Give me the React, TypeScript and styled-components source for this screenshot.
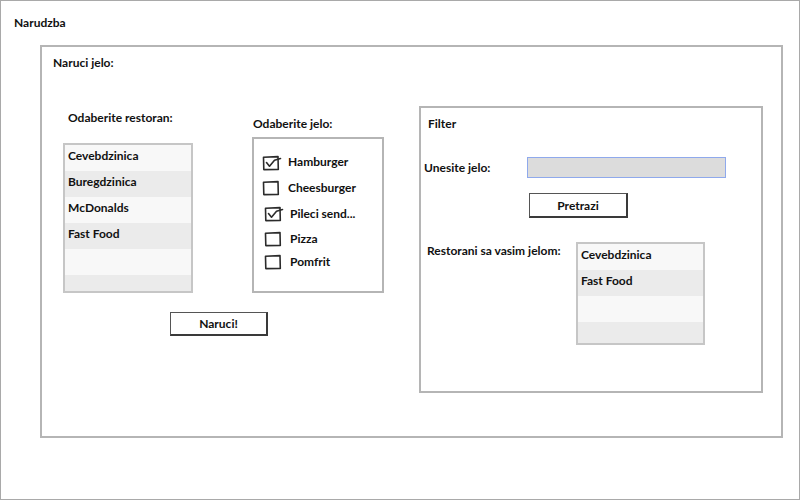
import React from "react";
import styled, { createGlobalStyle } from "styled-components";

const Global = createGlobalStyle`
  html, body { margin: 0; padding: 0; background: #fff; }
  body { font-family: Lato, "Open Sans", "Liberation Sans", sans-serif; color: #111; }
  * { box-sizing: border-box; }
`;

const Window = styled.div`
  width: 800px;
  height: 500px;
  border: 1px solid #a9a9a9;
  display: flex;
  flex-direction: column;
  background: #fff;
`;

const Text = styled.div<{ $ml?: number; $mt?: number; $w?: number }>`
  font-size: 12px;
  font-weight: 700;
  line-height: 16px;
  white-space: nowrap;
  margin-left: ${(p) => p.$ml ?? 0}px;
  margin-top: ${(p) => p.$mt ?? 0}px;
  ${(p) => (p.$w ? `width: ${p.$w}px; flex: none;` : "")}
`;

const Title = styled(Text)`
  margin: 14px 0 0 13px;
`;

const Panel = styled.div`
  margin: 14px 0 0 39px;
  width: 743px;
  height: 393px;
  border: 2px solid #b5b5b5;
  padding-top: 8px;
  display: flex;
  flex-direction: column;
`;

const Body = styled.div`
  display: flex;
  align-items: flex-start;
  margin: 35px 0 0 21px;
`;

const OrderArea = styled.div`
  display: flex;
  flex-direction: column;
`;

const Groups = styled.div`
  display: flex;
  align-items: flex-start;
  gap: 59px;
`;

const Group = styled.div<{ $mt: number; $gap: number }>`
  display: flex;
  flex-direction: column;
  margin-top: ${(p) => p.$mt}px;
  gap: ${(p) => p.$gap}px;
`;

const List = styled.div<{ $w: number; $h: number }>`
  width: ${(p) => p.$w}px;
  height: ${(p) => p.$h}px;
  border: 2px solid #c6c6c6;
  overflow: hidden;
  display: flex;
  flex-direction: column;
  flex: none;
`;

const ListRow = styled.div<{ $alt: boolean }>`
  height: 26px;
  flex: none;
  background: ${(p) => (p.$alt ? "#ebebeb" : "#f8f8f8")};
  font-size: 12px;
  font-weight: 700;
  line-height: 21px;
  padding-left: 3px;
  white-space: nowrap;
`;

const CheckPanel = styled.div`
  width: 132px;
  height: 156px;
  border: 2px solid #b5b5b5;
  padding: 10px 0 0 7px;
  display: flex;
  flex-direction: column;
`;

const CheckRow = styled.div<{ $h: number; $ml: number }>`
  height: ${(p) => p.$h}px;
  display: flex;
  align-items: center;
  gap: 6px;
  margin-left: ${(p) => p.$ml}px;
  font-size: 12px;
  font-weight: 700;
  white-space: nowrap;
`;

const Button = styled.div<{ $w: number; $h: number; $ml: number; $mt: number }>`
  width: ${(p) => p.$w}px;
  height: ${(p) => p.$h}px;
  margin-left: ${(p) => p.$ml}px;
  margin-top: ${(p) => p.$mt}px;
  border: 1px solid #555;
  border-right: 2px solid #3a3a3a;
  border-bottom: 2px solid #3a3a3a;
  background: #fff;
  display: flex;
  align-items: center;
  justify-content: center;
  font-size: 12px;
  font-weight: 700;
  flex: none;
`;

const FilterPanel = styled.div`
  margin-left: 35px;
  width: 344px;
  height: 287px;
  border: 2px solid #b5b5b5;
  padding: 8px 0 0 0;
  display: flex;
  flex-direction: column;
`;

const FieldRow = styled.div<{ $mt: number; $align: string }>`
  display: flex;
  align-items: ${(p) => p.$align};
  margin-top: ${(p) => p.$mt}px;
`;

const Input = styled.div`
  width: 199px;
  height: 21px;
  background: #dcdcdc;
  border: 1px solid #8fa9ec;
`;

const CheckBox: React.FC<{ checked: boolean }> = ({ checked }) => (
  <svg width="20" height="18" viewBox="0 0 20 18" style={{ flex: "none" }}>
    <path
      d="M1.5 4.2 L16 3.6 L16.3 16.4 L1.8 16.6 Z"
      fill="none"
      stroke="#2b2b2b"
      strokeWidth="1.6"
      strokeLinejoin="round"
    />
    {checked && (
      <path
        d="M4.5 9.5 L7.5 13.2 L12.5 7.2 L18.5 5.5"
        fill="none"
        stroke="#2b2b2b"
        strokeWidth="1.6"
        strokeLinecap="round"
        strokeLinejoin="round"
      />
    )}
  </svg>
);

const restaurants = ["Cevebdzinica", "Buregdzinica", "McDonalds", "Fast Food", "", ""];
const dishes = [
  { name: "Hamburger", checked: true, h: 25, ml: 1 },
  { name: "Cheesburger", checked: false, h: 26, ml: 1 },
  { name: "Pileci send...", checked: true, h: 26, ml: 3 },
  { name: "Pizza", checked: false, h: 24, ml: 3 },
  { name: "Pomfrit", checked: false, h: 22, ml: 3 },
];
const found = ["Cevebdzinica", "Fast Food", "", ""];

export default function App() {
  return (
    <>
      <Global />
      <Window>
        <Title>Narudzba</Title>
        <Panel>
          <Text $ml={11}>Naruci jelo:</Text>
          <Body>
            <OrderArea>
              <Groups>
                <Group $mt={4} $gap={17}>
                  <Text $ml={5}>Odaberite restoran:</Text>
                  <List $w={130} $h={150}>
                    {restaurants.map((r, i) => (
                      <ListRow key={i} $alt={i % 2 === 1}>
                        {r}
                      </ListRow>
                    ))}
                  </List>
                </Group>
                <Group $mt={10} $gap={5}>
                  <Text $ml={1}>Odaberite jelo:</Text>
                  <CheckPanel>
                    {dishes.map((d) => (
                      <CheckRow key={d.name} $h={d.h} $ml={d.ml}>
                        <CheckBox checked={d.checked} />
                        {d.name}
                      </CheckRow>
                    ))}
                  </CheckPanel>
                </Group>
              </Groups>
              <Button $w={98} $h={24} $ml={107} $mt={19}>
                Naruci!
              </Button>
            </OrderArea>
            <FilterPanel>
              <Text $ml={7}>Filter</Text>
              <FieldRow $mt={25} $align="center">
                <Text $ml={3} $w={103}>
                  Unesite jelo:
                </Text>
                <Input />
              </FieldRow>
              <Button $w={99} $h={25} $ml={108} $mt={15}>
                Pretrazi
              </Button>
              <FieldRow $mt={24} $align="flex-start">
                <Text $ml={6} $mt={1} $w={149}>
                  Restorani sa vasim jelom:
                </Text>
                <List $w={129} $h={103}>
                  {found.map((r, i) => (
                    <ListRow key={i} $alt={i % 2 === 1}>
                      {r}
                    </ListRow>
                  ))}
                </List>
              </FieldRow>
            </FilterPanel>
          </Body>
        </Panel>
      </Window>
    </>
  );
}
